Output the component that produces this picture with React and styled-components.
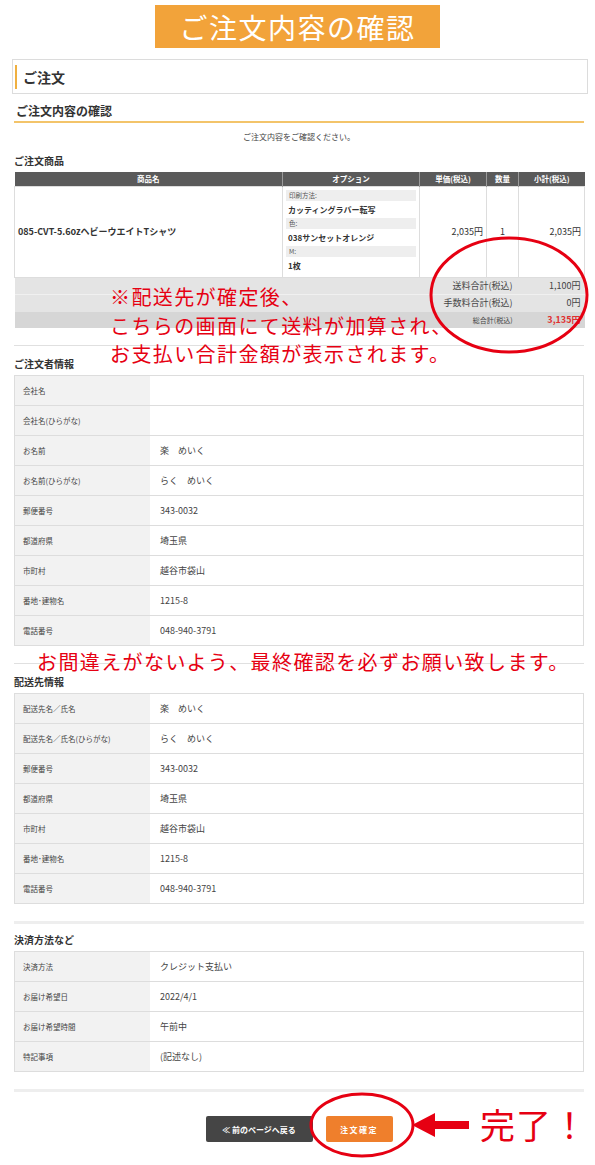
import React from "react";
import styled, { createGlobalStyle } from "styled-components";

const GlobalStyle = createGlobalStyle`
  html, body { margin: 0; padding: 0; background: #fff; }
  body {
    font-family: "Noto Sans CJK JP", "Noto Sans", sans-serif;
    color: #333;
  }
  * { box-sizing: border-box; }
`;

const RED = "#e60012";

const Page = styled.div`
  position: relative;
  width: 595px;
  min-height: 1165px;
  overflow: hidden;
  padding-top: 5px;
`;

const Banner = styled.h1`
  margin: 0 auto;
  width: 285px;
  height: 43px;
  background: #f2a33a;
  color: #fff;
  font-size: 28px;
  font-weight: 400;
  letter-spacing: 1.5px;
  display: flex;
  align-items: center;
  justify-content: center;
`;

const OrderBox = styled.div`
  margin: 11px 7px 0 12px;
  height: 35px;
  border: 1px solid #dcdcdc;
  display: flex;
  align-items: center;
`;

const Accent = styled.span`
  width: 2px;
  height: 24px;
  margin-left: 2px;
  background: #f0b040;
`;

const OrderBoxTitle = styled.span`
  margin-left: 6px;
  font-size: 14px;
  font-weight: 700;
  color: #333;
`;

const Main = styled.div`
  margin: 0 11px 0 14px;
`;

const SectionTitle = styled.h2`
  margin: 8px 0 0;
  padding: 0 0 2px 2px;
  font-size: 12px;
  line-height: 17px;
  font-weight: 700;
  border-bottom: 2px solid #f3c46a;
`;

const Lead = styled.p`
  margin: 8px 0 0;
  text-align: center;
  font-size: 8px;
  line-height: 12px;
  color: #444;
`;

const SubHeading = styled.h3`
  margin: ${(p) => p.$top || 11}px 0 4px;
  font-size: 10px;
  line-height: 14px;
  font-weight: 700;
  color: #333;
`;

const Separator = styled.hr`
  margin: 17px 0 0;
  border: 0;
  border-top: ${(p) => (p.$thick ? "3px solid #eeeeee" : "1px solid #e0e0e0")};
`;

const OrderTable = styled.table`
  width: 100%;
  border-collapse: collapse;
  table-layout: fixed;
`;

const Th = styled.th`
  height: 14px;
  padding: 0;
  background: #5a5a5a;
  color: #fff;
  font-size: 7.5px;
  font-weight: 700;
  text-align: center;
  border-left: 1px solid #9a9a9a;
  &:first-child { border-left: 0; }
`;

const Td = styled.td`
  height: 90px;
  padding: ${(p) => (p.$option ? "3px" : "0 3px")};
  border: 1px solid #dddddd;
  font-size: 9px;
  font-weight: ${(p) => (p.$bold ? 700 : 400)};
  text-align: ${(p) => p.$align || "left"};
  vertical-align: middle;
  color: #333;
`;

const OptLabel = styled.div`
  height: 11px;
  line-height: 11px;
  padding-left: 3px;
  background: #eeeeee;
  font-size: 6.5px;
  color: #555;
`;

const OptValue = styled.div`
  height: 17px;
  line-height: 17px;
  padding-left: 2px;
  font-size: 8px;
  font-weight: 700;
  color: #333;
`;

const SumRow = styled.tr`
  background: ${(p) => (p.$total ? "#d6d6d6" : "#e4e4e4")};
  border-top: 1px solid ${(p) => (p.$total ? "#e4e4e4" : "#f0f0f0")};
`;

const SumLabel = styled.td`
  height: 17px;
  padding: 0 6px 0 0;
  text-align: right;
  font-size: ${(p) => (p.$small ? "7px" : "9px")};
  color: #444;
`;

const SumValue = styled.td`
  height: 17px;
  padding: 0 4px 0 0;
  text-align: right;
  font-size: 9px;
  font-weight: ${(p) => (p.$red ? 700 : 400)};
  color: ${(p) => (p.$red ? "#e03030" : "#444")};
`;

const InfoTable = styled.div`
  border: 1px solid #dddddd;
`;

const InfoRow = styled.div`
  display: grid;
  grid-template-columns: 135px 1fr;
  height: 30px;
  border-top: 1px solid #dddddd;
  &:first-child { height: 29px; border-top: 0; }
`;

const InfoLabel = styled.div`
  display: flex;
  align-items: center;
  padding-left: 8px;
  background: #f2f2f2;
  font-size: 7.5px;
  color: #444;
`;

const InfoValue = styled.div`
  display: flex;
  align-items: center;
  padding-left: 10px;
  font-size: 9px;
  color: #444;
`;

const Buttons = styled.div`
  display: flex;
  justify-content: center;
  gap: 13px;
  margin-top: 24px;
`;

const Button = styled.button`
  width: ${(p) => p.$w}px;
  height: 26px;
  border: 0;
  border-radius: 2px;
  background: ${(p) => p.$bg};
  color: #fff;
  font-family: inherit;
  font-size: 8px;
  font-weight: 700;
  letter-spacing: ${(p) => (p.$spaced ? "1.5px" : "0")};
  padding: 0;
`;

const Note = styled.div`
  position: absolute;
  left: ${(p) => p.$x}px;
  top: ${(p) => p.$y}px;
  color: ${RED};
  font-size: ${(p) => p.$size || 20}px;
  line-height: ${(p) => p.$lh || 28.5}px;
  letter-spacing: ${(p) => (p.$ls ?? 1.4)}px;
  white-space: nowrap;
`;

const Overlay = styled.svg`
  position: absolute;
  left: ${(p) => p.$x}px;
  top: ${(p) => p.$y}px;
  overflow: visible;
`;

const ordererRows = [
  ["会社名", ""],
  ["会社名(ひらがな)", ""],
  ["お名前", "楽　めいく"],
  ["お名前(ひらがな)", "らく　めいく"],
  ["郵便番号", "343-0032"],
  ["都道府県", "埼玉県"],
  ["市町村", "越谷市袋山"],
  ["番地･建物名", "1215-8"],
  ["電話番号", "048-940-3791"],
];

const deliveryRows = [
  ["配送先名／氏名", "楽　めいく"],
  ["配送先名／氏名(ひらがな)", "らく　めいく"],
  ["郵便番号", "343-0032"],
  ["都道府県", "埼玉県"],
  ["市町村", "越谷市袋山"],
  ["番地･建物名", "1215-8"],
  ["電話番号", "048-940-3791"],
];

const paymentRows = [
  ["決済方法", "クレジット支払い"],
  ["お届け希望日", "2022/4/1"],
  ["お届け希望時間", "午前中"],
  ["特記事項", "(記述なし)"],
];

const options = [
  ["印刷方法:", "カッティングラバー転写"],
  ["色:", "038サンセットオレンジ"],
  ["M:", "1枚"],
];

function Info({ rows }) {
  return (
    <InfoTable>
      {rows.map(([k, v]) => (
        <InfoRow key={k}>
          <InfoLabel>{k}</InfoLabel>
          <InfoValue>{v}</InfoValue>
        </InfoRow>
      ))}
    </InfoTable>
  );
}

export default function App() {
  return (
    <Page>
      <GlobalStyle />
      <Banner>ご注文内容の確認</Banner>
      <OrderBox>
        <Accent />
        <OrderBoxTitle>ご注文</OrderBoxTitle>
      </OrderBox>
      <Main>
        <SectionTitle>ご注文内容の確認</SectionTitle>
        <Lead>ご注文内容をご確認ください。</Lead>
        <SubHeading>ご注文商品</SubHeading>
        <OrderTable>
          <colgroup>
            <col style={{ width: 268 }} />
            <col style={{ width: 137 }} />
            <col style={{ width: 67 }} />
            <col style={{ width: 32 }} />
            <col style={{ width: 66 }} />
          </colgroup>
          <thead>
            <tr>
              <Th>商品名</Th>
              <Th>オプション</Th>
              <Th>単価(税込)</Th>
              <Th>数量</Th>
              <Th>小計(税込)</Th>
            </tr>
          </thead>
          <tbody>
            <tr>
              <Td $bold>085-CVT-5.6ozヘビーウエイトTシャツ</Td>
              <Td $option>
                {options.map(([l, v]) => (
                  <React.Fragment key={l}>
                    <OptLabel>{l}</OptLabel>
                    <OptValue>{v}</OptValue>
                  </React.Fragment>
                ))}
              </Td>
              <Td $align="right">2,035円</Td>
              <Td $align="center">1</Td>
              <Td $align="right">2,035円</Td>
            </tr>
            <SumRow>
              <SumLabel colSpan={4}>送料合計(税込)</SumLabel>
              <SumValue>1,100円</SumValue>
            </SumRow>
            <SumRow>
              <SumLabel colSpan={4}>手数料合計(税込)</SumLabel>
              <SumValue>0円</SumValue>
            </SumRow>
            <SumRow $total>
              <SumLabel colSpan={4} $small>総合計(税込)</SumLabel>
              <SumValue $red>3,135円</SumValue>
            </SumRow>
          </tbody>
        </OrderTable>

        <Separator />
        <SubHeading>ご注文者情報</SubHeading>
        <Info rows={ordererRows} />

        <Separator />
        <SubHeading>配送先情報</SubHeading>
        <Info rows={deliveryRows} />

        <Separator $thick />
        <SubHeading $top={9}>決済方法など</SubHeading>
        <Info rows={paymentRows} />

        <Separator $thick />
        <Buttons>
          <Button $w={107} $bg="#454545">≪ 前のページへ戻る</Button>
          <Button $w={67} $bg="#ef7f2c" $spaced>注文確定</Button>
        </Buttons>
      </Main>

      <Note $x={110} $y={283}>
        ※配送先が確定後、
        <br />
        こちらの画面にて送料が加算され、
        <br />
        お支払い合計金額が表示されます。
      </Note>
      <Overlay $x={426} $y={234} width="166" height="122" viewBox="0 0 166 122">
        <ellipse cx="83" cy="61" rx="78" ry="57" fill="none" stroke={RED} strokeWidth="3" />
      </Overlay>

      <Note $x={37} $y={648}>お間違えがないよう、最終確認を必ずお願い致します。</Note>

      <Overlay $x={308} $y={1091} width="108" height="68" viewBox="0 0 108 68">
        <ellipse cx="54" cy="34" rx="51" ry="31" fill="none" stroke={RED} strokeWidth="3" />
      </Overlay>
      <Overlay $x={411} $y={1111} width="60" height="28" viewBox="0 0 60 28">
        <polygon points="1,14 24,2 24,10 58,10 58,18 24,18 24,26" fill={RED} />
      </Overlay>
      <Note $x={480} $y={1103} $size={35} $lh={42} $ls={1}>完了！</Note>
    </Page>
  );
}
